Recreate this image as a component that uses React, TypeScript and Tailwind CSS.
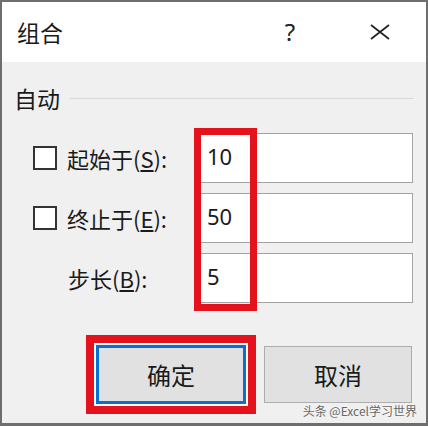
import React from 'react';

const rows = [
  { label: '起始于', key: 'S', value: '10', check: true },
  { label: '终止于', key: 'E', value: '50', check: true },
  { label: '步长', key: 'B', value: '5', check: false },
];

function CloseIcon() {
  return (
    <svg width="20" height="16" viewBox="0 0 20 16" fill="none">
      <path d="M1 1L19 15M19 1L1 15" stroke="#1f1f1f" strokeWidth="1.6" />
    </svg>
  );
}

export default function App() {
  return (
    <div className="flex h-[426px] w-[428px] flex-col overflow-hidden border-x-2 border-t-2 border-b-[3px] border-[#6e6e6e] font-['Noto_Sans_CJK_SC',sans-serif] text-[#1a1a1a]">
      {/* title bar */}
      <div className="flex h-[60px] shrink-0 items-center bg-white pl-[15px] pr-[23px]">
        <span className="text-[23px] leading-none">组合</span>
        <div className="ml-auto flex w-[46px] justify-center font-['Noto_Sans',sans-serif] text-[24px] leading-none text-[#222]">?</div>
        <div className="ml-[44px] flex w-[46px] justify-center">
          <CloseIcon />
        </div>
      </div>

      <div className="relative flex-1 bg-[#f0f0f0] pt-[24px]">
        <div className="flex h-[24px] items-center pl-[12px] pr-[13px]">
          <span className="text-[23px] leading-none">自动</span>
          <div className="ml-[10px] h-px flex-1 bg-[#d6d6d6]" />
        </div>

        <div className="relative mt-[23px] flex flex-col gap-[10px]">
          {rows.map((row) => (
            <div key={row.key} className="flex h-[50px] items-center pl-[31px] pr-[13px]">
              {row.check ? (
                <div className="h-[24px] w-[24px] shrink-0 border-2 border-[#333] bg-white" />
              ) : (
                <div className="w-[25px] shrink-0" />
              )}
              <span className="ml-[10px] flex-1 text-[22px] leading-none">
                {row.label}(<span className="underline underline-offset-2">{row.key}</span>):
              </span>
              <div className="flex h-[50px] w-[213px] items-center border border-[#a3a3a3] bg-white pb-[4px] pl-[6px] font-['Noto_Sans',sans-serif] text-[22px] leading-none">
                {row.value}
              </div>
            </div>
          ))}
          <div className="pointer-events-none absolute left-[192px] top-[-5px] h-[183px] w-[63px] border-[7px] border-[#e3121c]" />
        </div>

        <div className="mt-[32px] flex items-center pl-[84px]">
          <div className="border-[8px] border-[#e3121c] bg-white p-[2px]">
            <div className="flex h-[59px] w-[150px] items-center justify-center border-[3px] border-[#0a6fd0] bg-[#e1e1e1] text-[24px] leading-none">
              确定
            </div>
          </div>
          <div className="ml-[8px] flex h-[57px] w-[148px] items-center justify-center border border-[#adadad] bg-[#e1e1e1] text-[24px] leading-none">
            取消
          </div>
        </div>

        <span className="absolute bottom-[6px] right-[9px] text-[12px] leading-none text-[#666] [text-shadow:0_0_2px_#fff]">
          头条 @Excel学习世界
        </span>
      </div>
    </div>
  );
}
